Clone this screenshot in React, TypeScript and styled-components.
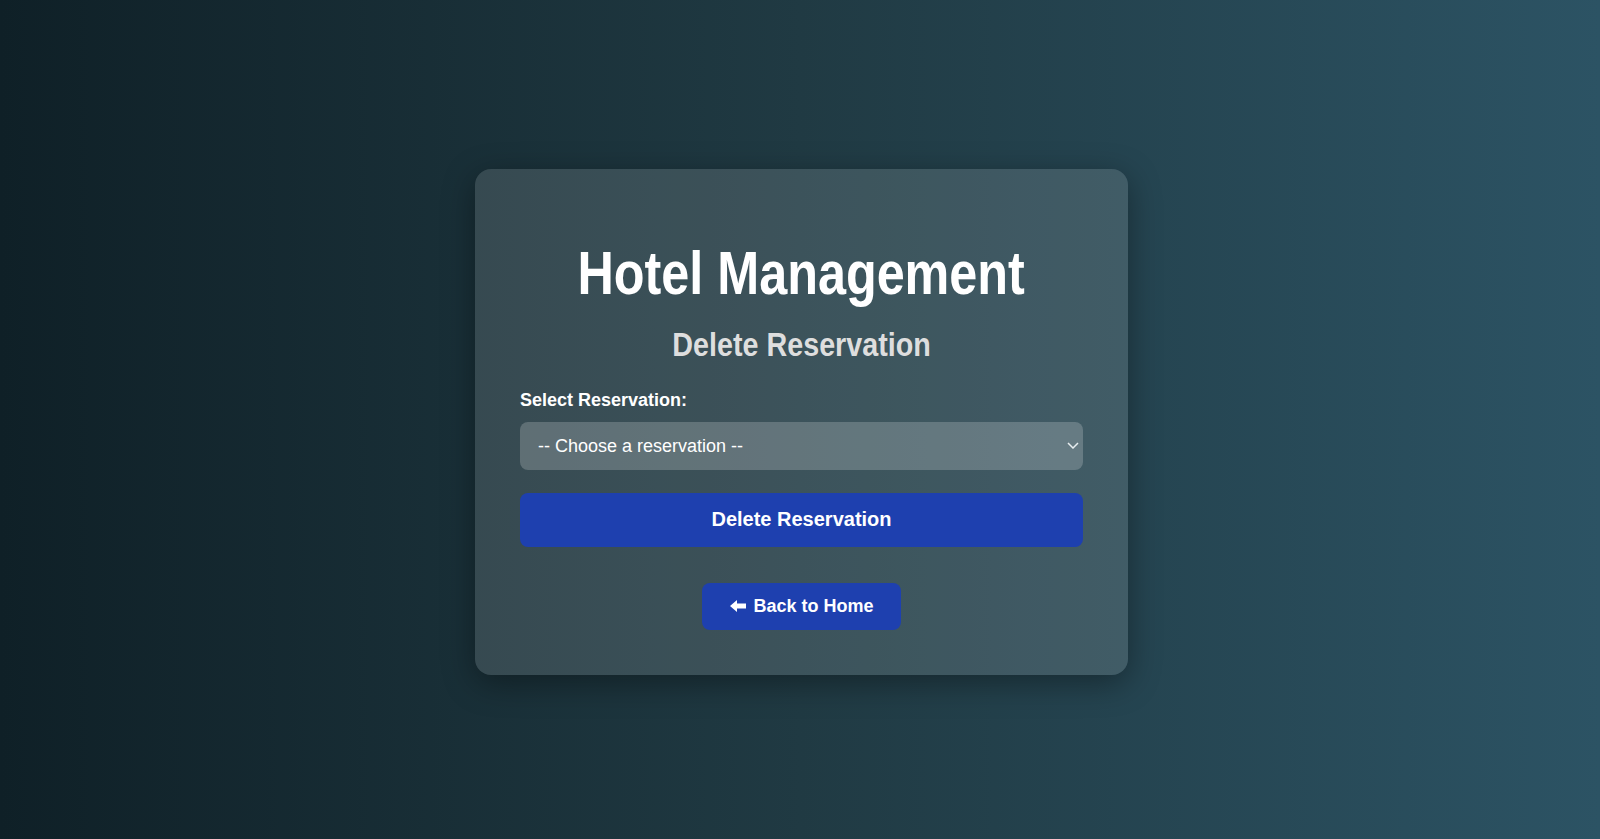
import React from "react";
import styled, { createGlobalStyle } from "styled-components";

const GlobalStyle = createGlobalStyle`
  html, body { margin: 0; padding: 0; }
  body {
    font-family: "Liberation Sans", Arial, Helvetica, sans-serif;
    background: linear-gradient(to right, #0f2027, #203a43, #2c5364);
    min-height: 100vh;
  }
`;

const Page = styled.div`
  min-height: 100vh;
  box-sizing: border-box;
  padding: 4px 0 0 3px;
  display: flex;
  align-items: center;
  justify-content: center;
`;

const Card = styled.div`
  width: 653px;
  box-sizing: border-box;
  padding: 45px;
  border-radius: 16px;
  background: rgba(255, 255, 255, 0.13);
  box-shadow: 0 8px 32px rgba(0, 0, 0, 0.37);
  display: flex;
  flex-direction: column;
  color: #fff;
`;

const Title = styled.h1`
  margin: 24px 0 0;
  align-self: center;
  font-weight: 700;
  font-size: 61px;
  line-height: 70px;
  text-align: center;
  white-space: nowrap;
  color: #fff;
  transform: scaleX(0.825);
`;

const Subtitle = styled.h2`
  margin: 17px 0 0;
  align-self: center;
  font-weight: 700;
  font-size: 33px;
  line-height: 40px;
  text-align: center;
  white-space: nowrap;
  color: #dedede;
  transform: scaleX(0.87);
`;

const Label = styled.label`
  margin-top: 25px;
  font-weight: 700;
  font-size: 18px;
  line-height: 20px;
  color: #fff;
`;

const SelectWrap = styled.div`
  position: relative;
  margin-top: 12px;
`;

const Select = styled.select`
  appearance: none;
  -webkit-appearance: none;
  width: 100%;
  height: 48px;
  box-sizing: border-box;
  padding: 0 30px 0 18px;
  border: none;
  border-radius: 8px;
  background: rgba(255, 255, 255, 0.2);
  color: #fff;
  font-family: "Liberation Sans", Arial, sans-serif;
  font-size: 18px;
  outline: none;
`;

const Chevron = styled.svg`
  position: absolute;
  right: 4px;
  top: 20px;
  pointer-events: none;
`;

const DeleteButton = styled.button`
  margin-top: 23px;
  height: 54px;
  width: 100%;
  border: none;
  border-radius: 8px;
  background: #1e40af;
  color: #fff;
  font-family: "Liberation Sans", Arial, sans-serif;
  font-weight: 700;
  font-size: 20px;
  cursor: pointer;
`;

const BackRow = styled.div`
  margin-top: 36px;
  display: flex;
  justify-content: center;
`;

const BackButton = styled.a`
  display: inline-flex;
  align-items: center;
  gap: 7px;
  height: 47px;
  padding: 0 27px 0 28px;
  box-sizing: border-box;
  border-radius: 8px;
  background: #1e40af;
  color: #fff;
  font-weight: 700;
  font-size: 18px;
  text-decoration: none;
`;

const Arrow = () => (
  <svg width="16" height="12" viewBox="0 0 16 12" aria-hidden="true">
    <path d="M0 6 L7 0 L7 3.5 L16 3.5 L16 8.5 L7 8.5 L7 12 Z" fill="#fff" />
  </svg>
);

export default function App() {
  return (
    <>
      <GlobalStyle />
      <Page>
        <Card>
          <Title>Hotel Management</Title>
          <Subtitle>Delete Reservation</Subtitle>
          <Label htmlFor="res">Select Reservation:</Label>
          <SelectWrap>
            <Select id="res" defaultValue="">
              <option value="">-- Choose a reservation --</option>
            </Select>
            <Chevron width="12" height="7" viewBox="0 0 12 7">
              <path d="M1 1 L6 6 L11 1" stroke="#e8eef0" strokeWidth="1.5" fill="none" />
            </Chevron>
          </SelectWrap>
          <DeleteButton>Delete Reservation</DeleteButton>
          <BackRow>
            <BackButton href="#">
              <Arrow />
              Back to Home
            </BackButton>
          </BackRow>
        </Card>
      </Page>
    </>
  );
}
